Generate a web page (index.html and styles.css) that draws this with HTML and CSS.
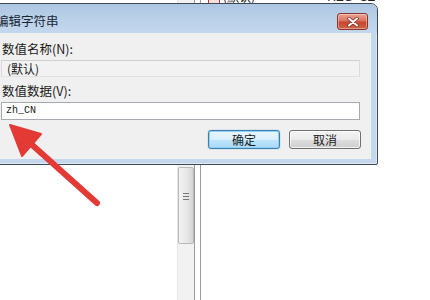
FILE: index.html
```html
<!DOCTYPE html>
<html lang="zh-CN">
<head>
    <meta charset="UTF-8">
    <title>编辑字符串</title>
    <link rel="stylesheet" href="styles.css">
</head>
<body>
    <div class="desktop">
        <div class="backdrop">
            <div class="tree-pane">
                <div class="vscroll">
                    <div class="thumb"><span class="grip"></span></div>
                </div>
            </div>
            <div class="list-pane">
                <div class="list-row">
                    <span class="reg-icon">ab</span>
                    <span class="reg-name">(默认)</span>
                    <span class="reg-type">REG_SZ</span>
                </div>
            </div>
        </div>

        <div class="dialog">
            <div class="titlebar">
                <span class="title">编辑字符串</span>
                <button class="close-btn" aria-label="关闭">
                    <svg viewBox="0 0 12 10" width="12" height="10">
                        <path d="M2 1.5L10 8.5M10 1.5L2 8.5" stroke="#7a2a20" stroke-width="3.4" stroke-linecap="round"/>
                        <path d="M2 1.5L10 8.5M10 1.5L2 8.5" stroke="#fff" stroke-width="2" stroke-linecap="round"/>
                    </svg>
                </button>
            </div>
            <div class="client">
                <label class="field-label">数值名称(N):</label>
                <div class="edit readonly">(默认)</div>
                <label class="field-label">数值数据(V):</label>
                <div class="edit mono">zh_CN</div>
                <div class="button-row">
                    <button class="btn default">确定</button>
                    <button class="btn">取消</button>
                </div>
            </div>
        </div>

        <svg class="arrow" viewBox="0 0 430 300" width="430" height="300">
            <line x1="97" y1="203" x2="30" y2="143" stroke="#e33a36" stroke-width="6" stroke-linecap="round"/>
            <polygon points="10,125 41,134 22,156" fill="#e33a36" stroke="#e33a36" stroke-width="2" stroke-linejoin="round"/>
        </svg>
    </div>
</body>
</html>
```

FILE: styles.css
```css
body, html {
    margin: 0;
    height: 100%;
    background-color: #fff;
    overflow: hidden;
    font-family: "Noto Sans CJK SC", "Liberation Sans", sans-serif;
    font-size: 12px;
}

.desktop {
    position: relative;
    width: 430px;
    height: 300px;
}

/* regedit panes behind the dialog */
.backdrop {
    display: flex;
    height: 300px;
}

.tree-pane {
    width: 194px;
    border-right: 1px solid #9c9c9c;
    display: flex;
    justify-content: flex-end;
}

.vscroll {
    width: 16px;
    background-color: #f2f2f2;
    border-left: 1px solid #e6e6e6;
}

.thumb {
    margin-top: 167px;
    height: 77px;
    border: 1px solid #b9b9b9;
    border-radius: 2px;
    background: linear-gradient(to right, #f3f3f3, #e6e6e6 60%, #d4d4d4);
    display: flex;
    justify-content: center;
    padding-top: 25px;
    box-sizing: border-box;
}

.grip {
    width: 6px;
    height: 7px;
    background: repeating-linear-gradient(#777 0 1px, transparent 1px 3px);
}

.list-pane {
    flex: 1;
    margin-left: 5px;
    border-left: 1px solid #9c9c9c;
}

.list-row {
    display: flex;
    align-items: center;
    height: 14px;
    margin-top: -10px;
    color: #222;
    line-height: 14px;
}

.reg-icon {
    margin-left: 7px;
    width: 10px;
    height: 12px;
    font-size: 7px;
    line-height: 12px;
    color: #c0392b;
    background-color: #f8e0dc;
    border: 1px solid #c0392b;
}

.reg-name { margin-left: 3px; }
.reg-type { margin-left: 72px; font-family: "Liberation Sans", sans-serif; }

/* the dialog window */
.dialog {
    position: absolute;
    top: 3px;
    left: -12px;
    width: 376px;
    border: 1px solid #3d4956;
    border-radius: 7px 7px 2px 2px;
    background-color: #c3d7ed;
    padding: 0 6px 5px 6px;
    box-shadow: inset 0 0 0 1px rgba(255,255,255,0.45);
}

.titlebar {
    height: 29px;
    margin: 0 -6px;
    padding: 0 9px 0 7px;
    display: flex;
    align-items: flex-start;
    justify-content: space-between;
    background: linear-gradient(#adc6e2, #bcd2ea 60%, #c3d7ed);
    border-radius: 6px 6px 0 0;
}

.title {
    margin-top: 10px;
    line-height: 14px;
    font-size: 12.5px;
    color: #1b2735;
}

.close-btn {
    margin-top: 9px;
    width: 31px;
    height: 17px;
    padding: 0;
    border: 1px solid #8a3528;
    border-radius: 3px;
    background: linear-gradient(#eaa494, #d9735f 45%, #c8452f 55%, #d0644c);
    display: flex;
    align-items: center;
    justify-content: center;
    box-shadow: inset 0 0 0 1px rgba(255,255,255,0.35);
}

.client {
    background-color: #f0f0f0;
    height: 126px;
    box-sizing: border-box;
    padding: 8px 11px 10px 6px;
    display: flex;
    flex-direction: column;
}

.field-label {
    height: 16px;
    line-height: 16px;
    padding-left: 1px;
    font-size: 12.5px;
    color: #1a1a1a;
}

.edit {
    margin-top: 3px;
    height: 18px;
    box-sizing: border-box;
    border: 1px solid #a6abb2;
    background-color: #fff;
    padding-left: 4px;
    line-height: 16px;
    color: #1a1a1a;
}

.edit.readonly {
    height: 17px;
    line-height: 15px;
    background-color: #f2f2f2;
    border-color: #cfcfcf #dadada #e2e2e2 #dadada;
    padding-left: 5px;
    margin-bottom: 6px;
}

.edit.mono {
    font-family: "Liberation Mono", monospace;
    font-size: 10px;
}

.button-row {
    margin-top: 10px;
    display: flex;
    justify-content: flex-end;
    gap: 9px;
    margin-right: -1px;
}

.btn {
    width: 72px;
    height: 19px;
    padding: 0;
    font-family: "Noto Sans CJK SC", sans-serif;
    font-size: 12px;
    line-height: 16px;
    color: #1a1a1a;
    border: 1px solid #707070;
    border-radius: 3px;
    background: linear-gradient(#f4f4f4, #ebebeb 50%, #dddddd 51%, #cfcfcf);
    box-shadow: inset 0 0 0 1px rgba(255,255,255,0.7);
}

.btn.default {
    border-color: #3c7fb1;
    background: linear-gradient(#e8f5fc, #d9f0fc 50%, #bee6fd 51%, #a7d9f5);
    box-shadow: inset 0 0 0 1px #8fd3f4, 0 0 1px #3c7fb1;
}

.arrow {
    position: absolute;
    top: 0;
    left: 0;
    pointer-events: none;
}
```
